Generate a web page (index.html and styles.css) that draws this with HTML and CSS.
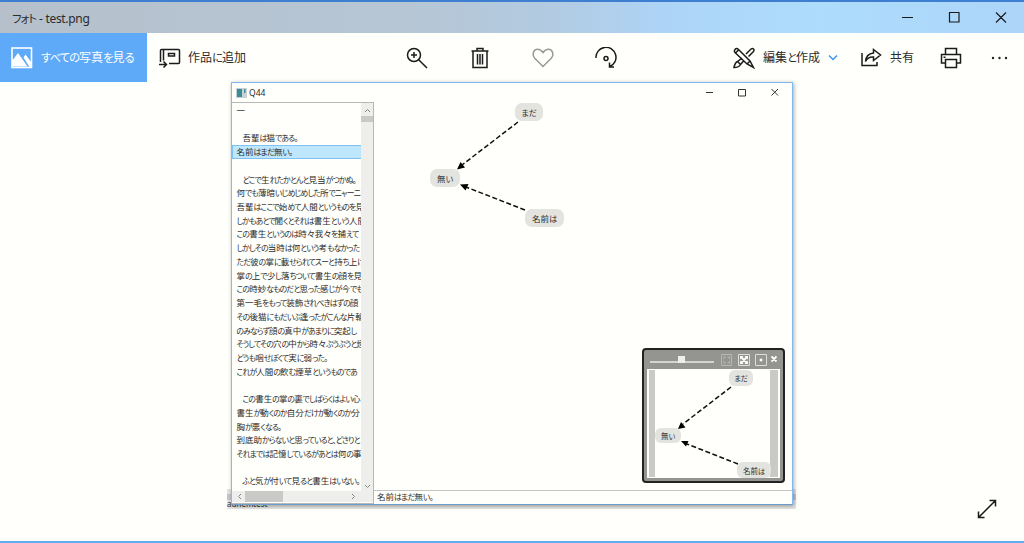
FILE: index.html
```
<!DOCTYPE html>
<html lang="ja">
<head>
    <meta charset="UTF-8">
    <meta name="viewport" content="width=device-width, initial-scale=1.0">
    <title>フォト - test.png</title>
    <link rel="stylesheet" href="styles.css">
</head>
<body>
    <div class="photos">
        <header class="titlebar">
            <span class="title">フォト - test.png</span>
            <svg class="window-buttons" width="120" height="20" viewBox="0 0 120 20">
                <path d="M6 10.500h11M53.500 5.500h9.500v9.500h-9.500zM100 5.500l10 10M110 5.500l-10 10"/>
            </svg>
        </header>

        <nav class="toolbar">
            <div class="see-all">
                <svg width="22" height="22" viewBox="0 0 22 22">
                    <rect class="frame" x="1" y="1" width="19.500" height="19.500"/>
                    <path class="hills" d="M1 14l6-8 9.500 13.500H1zM12.500 10.500l2-3 6 8v4.500h-2z"/>
                </svg>
                <span class="label-all">すべての写真を見る</span>
            </div>
            <div class="tool add">
                <svg width="22" height="20" viewBox="0 0 22 20">
                    <path d="M1.500 14V2.500q0-1 1-1h17q1 0 1 1v12q0 1-1 1H10M4.500 1.500v11M9.500 5.500h6v2.500h-6zM0 16.500h7.500M4.500 13.500l3 3-3 3"/>
                </svg>
                <span class="label-add">作品に追加</span>
            </div>
            <div class="center-tools">
                <svg width="22" height="22" viewBox="0 0 22 22">
                    <circle cx="8" cy="8" r="6.500"/>
                    <path d="M12.700 12.700l8.300 8.300M5 8h6M8 5v6"/>
                </svg>
                <svg width="22" height="22" viewBox="0 0 22 22">
                    <path d="M2.500 4h17M8 4V1.500h6V4M4 4v16.500h14V4M8.500 7v10.500M11 7v10.500M13.500 7v10.500"/>
                </svg>
                <svg class="heart" width="22" height="22" viewBox="0 0 22 22">
                    <path d="M11 19.500L2.500 11C-.5 7 2 2.300 5.500 2.300c2.500 0 4.300 1.500 5.500 3.400 1.200-1.900 3-3.400 5.500-3.400 3.500 0 6 4.700 3 8.700z"/>
                </svg>
                <svg width="22" height="22" viewBox="0 0 22 22">
                    <path d="M1 11a10 10 0 1 1 13.500 8.700M14.500 15.500v4.500h4.500"/>
                    <circle cx="11" cy="11.500" r="2"/>
                </svg>
            </div>
            <div class="tool edit">
                <svg width="22" height="22" viewBox="0 0 22 22">
                    <path d="M2 2.500q1.500-2 3.500 0L17 14l3.500 6.500L14 17 2.500 6Q.5 4 2 2.500zM2.500 6l3.500-3.500M14 17l3-3M13 7l5-5q1.500-1 2.500 0t0 2.500l-5 5M9 11l-4.500 3.500Q2 15.500 1 20.500q5 0 6.500-3L11 13.500M4.500 14.500l3 3"/>
                </svg>
                <span class="label-edit">編集と作成</span>
                <svg class="chevron" width="10" height="8" viewBox="0 0 10 8">
                    <path d="M1 1.500l4 4 4-4"/>
                </svg>
            </div>
            <div class="tool share">
                <svg width="21" height="20" viewBox="0 0 21 20">
                    <path d="M1 5v12.500h15V14M12.500 1.500l7 5.500-7 5.500V9Q7 8.500 4.500 13.500 5 6 12.500 5z"/>
                </svg>
                <span class="label-share">共有</span>
            </div>
            <svg class="print" width="22" height="22" viewBox="0 0 22 22">
                <path d="M5.500 7.500v-6h11v6M5.500 16H1.500V7.500h19V16h-4M5.500 12.500h11v8h-11zM3.500 10.200h2"/>
            </svg>
            <svg class="more" width="17" height="4" viewBox="0 0 17 4">
                <circle cx="2" cy="2" r="1.200"/><circle cx="8.500" cy="2" r="1.200"/><circle cx="15" cy="2" r="1.200"/>
            </svg>
        </nav>

        <main class="stage">
            <div class="picture">
                <div class="behind">auhemtest</div>
                <div class="app">
                    <div class="app-title">
                        <svg class="app-icon" width="11" height="10" viewBox="0 0 11 10">
                            <rect width="11" height="10" fill="#c9d2d2"/>
                            <rect x="1" y="1" width="5" height="8" fill="#3b8b98"/>
                            <path d="M8 1h1.500v4H8z" fill="#4a8d99"/>
                        </svg>
                        <span>Q44</span>
                        <svg class="app-buttons" width="76" height="12" viewBox="0 0 76 12">
                            <path d="M2 5.500h7M34.500 2.500h7v6.500h-7zM67.500 2l6.500 6.500M74 2l-6.500 6.500"/>
                        </svg>
                    </div>
                    <div class="app-body">
                        <div class="list">
                            <div class="lines">
                                <p>一</p>
                                <p></p>
                                <p class="indent">吾輩は猫である。</p>
                                <p class="selected">名前はまだ無い。</p>
                                <p></p>
                                <p class="indent">どこで生れたかとんと見当がつかぬ。</p>
                                <p>何でも薄暗いじめじめした所でニャーニ</p>
                                <p>吾輩はここで始めて人間というものを見</p>
                                <p>しかもあとで聞くとそれは書生という人間</p>
                                <p>この書生というのは時々我々を捕えて</p>
                                <p>しかしその当時は何という考もなかった</p>
                                <p>ただ彼の掌に載せられてスーと持ち上げ</p>
                                <p>掌の上で少し落ちついて書生の顔を見</p>
                                <p>この時妙なものだと思った感じが今でも</p>
                                <p>第一毛をもって装飾されべきはずの顔</p>
                                <p>その後猫にもだいぶ逢ったがこんな片輪</p>
                                <p>のみならず顔の真中があまりに突起し</p>
                                <p>そうしてその穴の中から時々ぷうぷうと煙</p>
                                <p>どうも咽せぽくて実に弱った。</p>
                                <p>これが人間の飲む煙草というものであ</p>
                                <p></p>
                                <p class="indent">この書生の掌の裏でしばらくはよい心</p>
                                <p>書生が動くのか自分だけが動くのか分</p>
                                <p>胸が悪くなる。</p>
                                <p>到底助からないと思っていると、どさりと</p>
                                <p>それまでは記憶しているがあとは何の事</p>
                                <p></p>
                                <p class="indent">ふと気が付いて見ると書生はいない。</p>
                            </div>
                            <div class="vscroll">
                                <svg width="7" height="5" viewBox="0 0 7 5"><path d="M1 4l2.500-2.500L6 4"/></svg>
                                <div class="vthumb"></div>
                                <svg class="down" width="7" height="5" viewBox="0 0 7 5"><path d="M1 1l2.500 2.500L6 1"/></svg>
                            </div>
                            <div class="hscroll">
                                <svg width="5" height="7" viewBox="0 0 5 7"><path d="M4 1L1.500 3.500 4 6"/></svg>
                                <div class="hthumb"></div>
                                <svg class="right" width="5" height="7" viewBox="0 0 5 7"><path d="M1 1l2.500 2.500L1 6"/></svg>
                            </div>
                        </div>
                        <div class="view">
                            <div class="graph">
                                <svg class="edges" width="418" height="388" viewBox="374 102 418 388">
                                    <path class="edge" d="M518 122L462 165M525 210L466 187"/>
                                    <path d="M457 169.500l3.500-7.500 4.500 5.500zM460 184.500l8.500-.5-3 6.500z"/>
                                </svg>
                                <span class="node mada">まだ</span>
                                <span class="node nai">無い</span>
                                <span class="node namae">名前は</span>
                                <div class="overview">
                                    <div class="overview-bar">
                                        <div class="slider"><i></i></div>
                                        <svg width="60" height="14" viewBox="0 0 60 14">
                                            <path class="faint" d="M1.500 1.500h10v11h-10zM4 6V4h2M7.500 4h2v2M9.500 8v2h-2M6 10H4V8"/>
                                            <path d="M18.500 1.500h11v11h-11zM35.500 1.500h11v11h-11z"/>
                                            <path class="bold" d="M21.500 4.500l5 5M26.500 4.500l-5 5M51.500 3.500l5 5M56.500 3.500l-5 5"/>
                                            <path class="fill" d="M20 3h3.500L20 6.500zM28 3h-3.500L28 6.500zM20 11h3.500L20 7.500zM28 11h-3.500L28 7.500zM39.700 5.700h2.600v2.600h-2.600z"/>
                                        </svg>
                                    </div>
                                    <div class="overview-map">
                                        <svg class="edges" width="130" height="112" viewBox="647 369 130 112">
                                            <path class="edge" d="M730 386L682 423M737 463L686 443"/>
                                            <path d="M677 428l3-7 4.500 5.500zM680 440l7.500 0-2.500 5.500z"/>
                                        </svg>
                                        <span class="node mini-mada">まだ</span>
                                        <span class="node mini-nai">無い</span>
                                        <span class="node mini-namae">名前は</span>
                                    </div>
                                </div>
                            </div>
                            <div class="status">名前はまだ無い。</div>
                        </div>
                    </div>
                </div>
            </div>
            <svg class="expand" width="20" height="20" viewBox="0 0 20 20">
                <path d="M1.500 18.500l17-17M12.500 1.500h6v6M1.500 12.500v6h6"/>
            </svg>
        </main>
    </div>

    <script>
        // かなだけ字幅を詰める
        document.querySelectorAll('.lines p, .status, .node, .see-all span, .tool span, .title').forEach(el => {
            el.innerHTML = el.textContent.replace(/[ぁ-んァ-ヶー、。]+/g, '<span class="kana">$&</span>');
            if (el.classList.contains('node')) {
                el.innerHTML = `<span>${el.innerHTML}</span>`;
            }
        });
    </script>
</body>
</html>
```
FILE: styles.css
```
* {
    margin: 0;
    padding: 0;
    box-sizing: border-box;
}

body {
    width: 1024px;
    height: 543px;
    overflow: hidden;
    background: #fffffb;
    font-family: "Noto Sans", "Noto Sans CJK JP", sans-serif;
    font-feature-settings: "palt";
    color: #2b2b2b;
}

svg {
    display: block;
    flex: none;
    fill: none;
    stroke: #1b1b1b;
    stroke-width: 1.5;
}

.kana {
    font-size: 0.94em;
    letter-spacing: -0.08em;
}

.lines .kana,
.status .kana {
    font-size: 0.92em;
    letter-spacing: -0.105em;
}

.node .kana {
    letter-spacing: -0.03em;
}

.photos {
    height: 543px;
    display: flex;
    flex-direction: column;
    border-bottom: 2px solid #62abf5;
}

.titlebar {
    height: 33px;
    flex: none;
    display: flex;
    align-items: center;
    justify-content: space-between;
    padding: 1px 0 0 12px;
    border-top: 2px solid #3f7fd2;
    background: linear-gradient(90deg, #b5c0cb 0%, #b6c6d5 40%, #b2cbe2 54%, #add5f8 66%, #addcfc 80%, #acd5f9 100%);
}

.title {
    font-size: 12px;
    letter-spacing: -0.3px;
}

.window-buttons {
    stroke-width: 1.2;
    margin-right: 8px;
    margin-top: -2px;
}

.toolbar {
    height: 49px;
    flex: none;
    display: flex;
    align-items: center;
}

.see-all {
    width: 147px;
    height: 49px;
    display: flex;
    align-items: center;
    gap: 8px;
    padding-left: 11px;
    background: #5eaaf8;
    color: #fff;
}

.frame {
    stroke: #fff;
    stroke-width: 1.6;
}

.hills {
    fill: #fff;
    stroke: none;
}

.tool,
.see-all {
    font-size: 12px;
    white-space: nowrap;
}

.tool span,
.see-all span {
    margin-top: -1px;
}

.tool {
    display: flex;
    align-items: center;
}

.add {
    width: 259px;
    padding-left: 12px;
    gap: 7px;
}

.center-tools {
    width: 327px;
    display: flex;
    gap: 41px;
}

.heart {
    stroke: #999;
}

.edit {
    width: 128px;
    gap: 8px;
}

.chevron {
    stroke: #3f95ee;
}

.share {
    width: 79px;
    gap: 8px;
}

.more {
    margin-left: 29px;
    fill: #222;
    stroke: none;
}

.stage {
    flex: 1;
    position: relative;
    padding-left: 227px;
}

.picture {
    width: 569px;
    height: 427px;
    padding: 0 4px;
    position: relative;
}

.behind {
    position: absolute;
    left: 0;
    right: 0;
    bottom: 0;
    height: 20px;
    padding-top: 9px;
    background: linear-gradient(#e3e3e3 0 5px, #c5c7cf 5px 11px, #e4e4e2 11px);
    font-size: 8px;
    line-height: 11px;
}

.app {
    position: relative;
    width: 562px;
    height: 423px;
    display: flex;
    flex-direction: column;
    background: #fffffb;
    border: 1px solid #83b9ef;
    border-bottom-color: #6c9dcd;
    box-shadow: 1px 1px 4px rgba(0, 0, 0, 0.35);
}

.app-title {
    height: 19px;
    flex: none;
    display: flex;
    align-items: center;
    padding-left: 4px;
    gap: 2px;
    font-size: 8.5px;
}

.app-icon {
    stroke: none;
}

.app-buttons {
    stroke: #333;
    stroke-width: 1;
    margin-left: auto;
    margin-right: 12px;
}

.app-body {
    flex: 1;
    min-height: 0;
    display: flex;
}

.list {
    width: 142px;
    display: grid;
    grid-template-columns: 129px 12px;
    grid-template-rows: 388px 11px;
    border: 1px solid #b8b8b8;
    border-left: 0;
}

.lines {
    overflow: hidden;
    padding-top: 1px;
    font-size: 8.5px;
    line-height: 13.72px;
}

.lines p {
    height: 13.72px;
    padding-left: 4.5px;
    white-space: nowrap;
}

.lines .indent {
    padding-left: 10.5px;
}

.lines .selected {
    background: #bee6fd;
    border: 1px solid #7fc1f2;
    border-right: 0;
    padding-left: 3.5px;
    line-height: 11.72px;
}

.vscroll,
.hscroll {
    display: flex;
    align-items: center;
    background: #eeeeec;
}

.vscroll {
    flex-direction: column;
    padding: 5px 0 0;
}

.vscroll svg,
.hscroll svg {
    stroke: #888;
    stroke-width: 1;
}

.vthumb {
    width: 12px;
    height: 6px;
    margin-top: 3px;
    background: #c9c9c7;
}

.down {
    margin-top: auto;
    margin-bottom: 2px;
}

.hscroll {
    grid-column: 1 / 3;
    padding-left: 5px;
}

.hthumb {
    width: 38px;
    height: 11px;
    margin-left: 3px;
    background: #c9c9c7;
}

.right {
    margin-left: auto;
    margin-right: 17px;
}

.view {
    flex: 1;
    display: flex;
    flex-direction: column;
}

.graph {
    flex: 1;
    position: relative;
}

.edges {
    position: absolute;
    left: 0;
    top: 0;
    fill: #000;
    stroke: none;
}

.edge {
    stroke: #111;
    stroke-width: 1.5;
    stroke-dasharray: 5 2.5;
}

.node {
    position: absolute;
    display: flex;
    align-items: center;
    justify-content: center;
    border-radius: 7px;
    background: #e3e3df;
    font-size: 8.5px;
    white-space: nowrap;
}

.mada {
    left: 141px;
    top: 1px;
    width: 28px;
    height: 18px;
}

.nai {
    left: 56px;
    top: 67px;
    width: 30px;
    height: 18px;
}

.namae {
    left: 151px;
    top: 107px;
    width: 39px;
    height: 18px;
}

.overview {
    position: absolute;
    left: 268px;
    top: 246px;
    width: 143px;
    height: 135px;
    display: flex;
    flex-direction: column;
    padding: 0 3px 3px;
    border: 2px solid #222;
    border-radius: 4px;
    background: #949490;
}

.overview-bar {
    height: 19px;
    flex: none;
    display: flex;
    align-items: center;
    padding-left: 3px;
    gap: 6px;
}

.overview-bar svg {
    stroke: #ddd;
    stroke-width: 1;
}

.overview-bar .faint {
    stroke: #b8b8b4;
}

.overview-bar .bold {
    stroke: #fff;
    stroke-width: 1.8;
}

.overview-bar .fill {
    fill: #fff;
    stroke: none;
}

.slider {
    width: 64px;
    height: 2px;
    flex: none;
    display: flex;
    align-items: center;
    margin-top: 4px;
    padding-left: 28px;
    background: #d4d4d0;
}

.slider i {
    width: 7px;
    height: 7px;
    flex: none;
    margin-top: -4px;
    background: #eee;
}

.overview-map {
    flex: 1;
    position: relative;
    border: 1px solid #fffffb;
    border-width: 1px 2px;
    background: linear-gradient(90deg, #c9c9c5 0 6px, #fffffb 6px 121px, #c9c9c5 121px);
}

.overview-map .edges {
    left: -1px;
}

.overview-map .node {
    font-size: 7.5px;
    border-radius: 6px;
}

.overview-map .mini-mada {
    left: 80px;
    top: 0;
    width: 24px;
    height: 16px;
}

.overview-map .mini-nai {
    left: 6px;
    top: 58px;
    width: 26px;
    height: 15px;
}

.overview-map .mini-namae {
    left: 88px;
    top: 92px;
    width: 34px;
    height: 16px;
}

.status {
    height: 14px;
    flex: none;
    padding-left: 3px;
    border-top: 1px solid #c4c4c4;
    font-size: 8.5px;
    line-height: 12px;
}

.expand {
    position: absolute;
    right: 27px;
    bottom: 22px;
}
```
